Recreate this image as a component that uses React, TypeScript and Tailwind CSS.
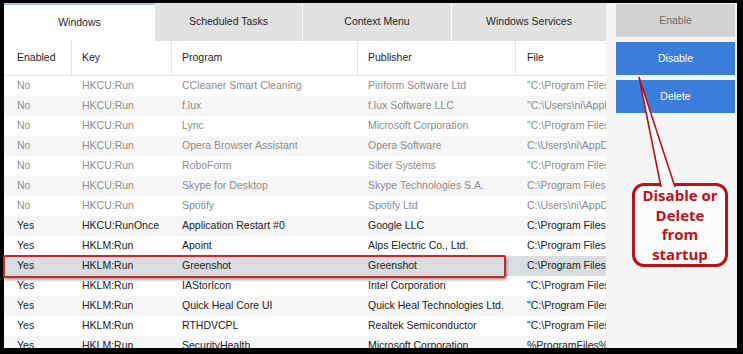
interface StartupItem {
  enabled: boolean;
  key: string;
  program: string;
  publisher: string;
  file: string;
}

const items: StartupItem[] = [
  { enabled: false, key: 'HKCU:Run', program: 'CCleaner Smart Cleaning', publisher: 'Piriform Software Ltd', file: '"C:\\Program Files\\CCleaner\\CCleaner64.exe"' },
  { enabled: false, key: 'HKCU:Run', program: 'f.lux', publisher: 'f.lux Software LLC', file: '"C:\\Users\\ni\\AppData\\Local\\FluxSoftware\\Flux\\flux.exe"' },
  { enabled: false, key: 'HKCU:Run', program: 'Lync', publisher: 'Microsoft Corporation', file: '"C:\\Program Files\\Microsoft Office\\lync.exe"' },
  { enabled: false, key: 'HKCU:Run', program: 'Opera Browser Assistant', publisher: 'Opera Software', file: 'C:\\Users\\ni\\AppData\\Local\\Programs\\Opera' },
  { enabled: false, key: 'HKCU:Run', program: 'RoboForm', publisher: 'Siber Systems', file: '"C:\\Program Files (x86)\\Siber Systems\\AI RoboForm"' },
  { enabled: false, key: 'HKCU:Run', program: 'Skype for Desktop', publisher: 'Skype Technologies S.A.', file: 'C:\\Program Files (x86)\\Microsoft\\Skype for Desktop' },
  { enabled: false, key: 'HKCU:Run', program: 'Spotify', publisher: 'Spotify Ltd', file: 'C:\\Users\\ni\\AppData\\Roaming\\Spotify\\Spotify.exe' },
  { enabled: true, key: 'HKCU:RunOnce', program: 'Application Restart #0', publisher: 'Google LLC', file: 'C:\\Program Files (x86)\\Google\\Chrome\\Application' },
  { enabled: true, key: 'HKLM:Run', program: 'Apoint', publisher: 'Alps Electric Co., Ltd.', file: 'C:\\Program Files\\DellTPad\\Apoint.exe' },
  { enabled: true, key: 'HKLM:Run', program: 'Greenshot', publisher: 'Greenshot', file: 'C:\\Program Files\\Greenshot\\Greenshot.exe' },
  { enabled: true, key: 'HKLM:Run', program: 'IAStorIcon', publisher: 'Intel Corporation', file: '"C:\\Program Files\\Intel\\Intel(R) Rapid Storage"' },
  { enabled: true, key: 'HKLM:Run', program: 'Quick Heal Core UI', publisher: 'Quick Heal Technologies Ltd.', file: '"C:\\Program Files\\Quick Heal\\Quick Heal Total"' },
  { enabled: true, key: 'HKLM:Run', program: 'RTHDVCPL', publisher: 'Realtek Semiconductor', file: '"C:\\Program Files\\Realtek\\Audio\\HDA\\RtkNGUI64.exe"' },
  { enabled: true, key: 'HKLM:Run', program: 'SecurityHealth', publisher: 'Microsoft Corporation', file: '%ProgramFiles%\\Windows Defender\\MSASCuiL.exe' },
];

const tabs = [
  { label: 'Windows', w: 'w-[151px]' },
  { label: 'Scheduled Tasks', w: 'w-[147px]' },
  { label: 'Context Menu', w: 'w-[149px]' },
  { label: 'Windows Services', w: 'w-[155px]' },
];

// column widths: Enabled, Key, Program, Publisher, File
const cols = ['w-[68px] pl-[13px]', 'w-[100px] pl-[10px]', 'w-[186px] pl-[10px]', 'w-[158px] pl-[10px]', 'w-[90px] pl-[11px]'];
const headers = ['Enabled', 'Key', 'Program', 'Publisher', 'File'];

export default function App() {
  return (
    <div
      className="relative w-[743px] h-[354px] bg-black pt-[3px] pl-[4px] pr-[6px] pb-[6px] overflow-hidden text-[10.5px] text-[#1e1e1e]"
      style={{ fontFamily: '"Liberation Sans", Arial, sans-serif' }}
    >
      <div className="flex h-full">
        {/* left: tabs + table */}
        <div className="w-[602px] bg-white flex flex-col overflow-hidden">
          <div className="flex h-[38px] shrink-0">
            {tabs.map((t, i) => (
              <div
                key={t.label}
                className={
                  i === 0
                    ? `${t.w} flex items-center justify-center bg-white border-t-2 border-[#a9c4e4]`
                    : `${t.w} flex items-center justify-center bg-[#e2e2e2] ${i > 1 ? 'border-l border-white' : ''}`
                }
              >
                {t.label}
              </div>
            ))}
          </div>

          <div className="flex h-[35px] shrink-0 border-b border-[#e8e8e8]">
            {headers.map((h, i) => (
              <div
                key={h}
                className={`${cols[i]} shrink-0 flex items-center ${i < 4 ? 'border-r border-[#e3e3e3]' : ''}`}
              >
                {h}
              </div>
            ))}
          </div>

          {items.map((it, r) => {
            const selected = it.program === 'Greenshot';
            const bg = selected ? 'bg-[#d9dde0]' : r % 2 === 1 ? 'bg-[#f6f6f6]' : 'bg-white';
            const color = it.enabled ? 'text-[#222222]' : 'text-[#8c8c8c]';
            const cells = [it.enabled ? 'Yes' : 'No', it.key, it.program, it.publisher, it.file];
            return (
              <div key={r} className={`flex h-[20px] shrink-0 items-center ${bg} ${color}`}>
                {cells.map((c, i) => (
                  <div key={i} className={`${cols[i]} shrink-0 whitespace-nowrap overflow-hidden`}>
                    {c}
                  </div>
                ))}
              </div>
            );
          })}
        </div>

        {/* right: action buttons */}
        <div className="flex-1 bg-[#f5f5f5] pl-[10px] pt-[1px] flex flex-col gap-[5px]">
          <button className="w-[119px] h-[33px] bg-[#d3d3d3] text-[#6e6e6e]">Enable</button>
          <button className="w-[119px] h-[33px] bg-[#3b7ddb] text-white">Disable</button>
          <button className="w-[119px] h-[33px] bg-[#3b7ddb] text-white">Delete</button>
        </div>
      </div>

      {/* annotation: selected row highlight */}
      <div className="absolute left-[3px] top-[255px] w-[503px] h-[23px] border-[2.5px] border-[#c6282e] rounded-[2px] shadow-[1px_2px_3px_rgba(0,0,0,0.35)]" />

      {/* annotation: callout */}
      <div
        className="absolute left-[632px] top-[183px] w-[96px] h-[84px] border-[3px] border-[#b8121b] rounded-[12px] bg-[#fbfbfb] flex flex-col items-center justify-center text-[#c0111b] font-bold text-[15px] leading-[19.5px] text-center"
        style={{ fontFamily: '"Open Sans", "Noto Sans", sans-serif' }}
      >
        <span>Disable or</span>
        <span>Delete</span>
        <span>from</span>
        <span>startup</span>
      </div>
      <svg className="absolute left-0 top-0" width="743" height="354" viewBox="0 0 743 354">
        <path d="M661 187 L639 77 L675 187" fill="#fbfbfb" stroke="#b8121b" strokeWidth="1.6" strokeLinejoin="miter" />
      </svg>
    </div>
  );
}
